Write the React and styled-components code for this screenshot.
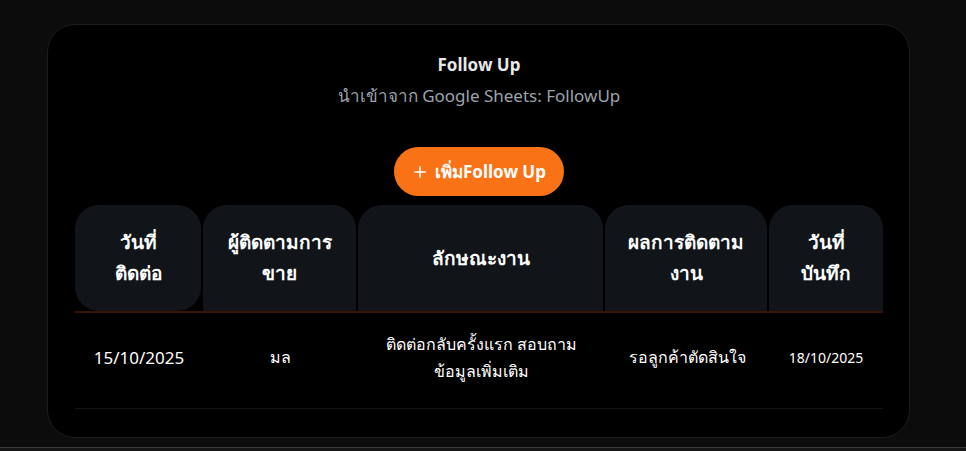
import React from 'react'
import styled, { createGlobalStyle } from 'styled-components'
import { Plus } from 'lucide-react'

const GlobalStyle = createGlobalStyle`
  html, body {
    margin: 0;
    padding: 0;
    background: #0c0c0c;
    font-family: 'Noto Sans', 'Open Sans', sans-serif;
    color: #f5f5f5;
  }
`

const Page = styled.div`
  min-height: 451px;
  padding: 24px 56px 0 47px;
  box-sizing: border-box;
  position: relative;
`

const Card = styled.section`
  width: 863px;
  box-sizing: border-box;
  background: #000;
  border: 1px solid #1d1d1d;
  border-radius: 28px;
  padding: 26px 26px 28px 27px;
  display: flex;
  flex-direction: column;
  align-items: center;
`

const Title = styled.h2`
  margin: 0;
  font-size: 17px;
  line-height: 28px;
  font-weight: 700;
  color: #e8e8e8;
`

const Subtitle = styled.p`
  margin: 5px 0 0;
  font-size: 17px;
  line-height: 24px;
  color: #9ca3af;
`

const AddButton = styled.button`
  margin-top: 39px;
  height: 49px;
  padding: 0 18px 0 17px;
  border: 0;
  border-radius: 999px;
  background: #f97316;
  color: #fff;
  font-family: inherit;
  font-size: 17px;
  font-weight: 700;
  display: inline-flex;
  align-items: center;
  gap: 6px;
  cursor: pointer;
`

const Table = styled.div`
  margin-top: 9px;
  width: 808px;
  display: grid;
  grid-template-columns: 126px 153px 245px 162px 114px;
  column-gap: 2px;
`

const HeadCell = styled.div`
  height: 106px;
  background: #11151a;
  border-radius: ${({ $round }) => ($round ? '24px' : '24px 24px 0 0')};
  display: flex;
  align-items: center;
  justify-content: center;
  text-align: center;
  font-size: 19px;
  line-height: 31px;
  font-weight: 700;
  color: #fff;
  padding: 0 10px;
`

const Divider = styled.div`
  grid-column: 1 / -1;
  height: 2px;
  background: #3a1206;
`

const BodyCell = styled.div`
  height: 96px;
  box-sizing: border-box;
  padding: 0 6px 6px;
  border-bottom: 1px solid #141414;
  display: flex;
  align-items: center;
  justify-content: center;
  text-align: center;
  font-size: ${({ $size }) => $size}px;
  line-height: 27px;
  color: #fff;
  margin-right: -2px;
  &:last-child {
    margin-right: 0;
  }
`

const BottomBar = styled.div`
  position: absolute;
  left: 0;
  right: 0;
  top: 447px;
  height: 4px;
  background: #161616;
  border-top: 1px solid #3a3a3a;
`

const headers = [
  { label: 'วันที่\nติดต่อ', round: true },
  { label: 'ผู้ติดตามการ\nขาย' },
  { label: 'ลักษณะงาน' },
  { label: 'ผลการติดตาม\nงาน' },
  { label: 'วันที่\nบันทึก' },
]

const row = [
  { value: '15/10/2025', size: 17 },
  { value: 'มล', size: 16 },
  { value: 'ติดต่อกลับครั้งแรก สอบถาม\nข้อมูลเพิ่มเติม', size: 16 },
  { value: 'รอลูกค้าตัดสินใจ', size: 16 },
  { value: '18/10/2025', size: 14 },
]

const Lines = ({ text }) =>
  text.split('\n').map((line, i) => (
    <React.Fragment key={i}>
      {i > 0 ? <br /> : null}
      {line}
    </React.Fragment>
  ))

export default function App() {
  return (
    <>
      <GlobalStyle />
      <Page>
        <Card>
          <Title>Follow Up</Title>
          <Subtitle>นำเข้าจาก Google Sheets: FollowUp</Subtitle>
          <AddButton>
            <Plus size={18} strokeWidth={2} />
            เพิ่มFollow Up
          </AddButton>
          <Table>
            {headers.map((h) => (
              <HeadCell key={h.label} $round={h.round}>
                <span>
                  <Lines text={h.label} />
                </span>
              </HeadCell>
            ))}
            <Divider />
            {row.map((c) => (
              <BodyCell key={c.value} $size={c.size}>
                <span>
                  <Lines text={c.value} />
                </span>
              </BodyCell>
            ))}
          </Table>
        </Card>
        <BottomBar />
      </Page>
    </>
  )
}
